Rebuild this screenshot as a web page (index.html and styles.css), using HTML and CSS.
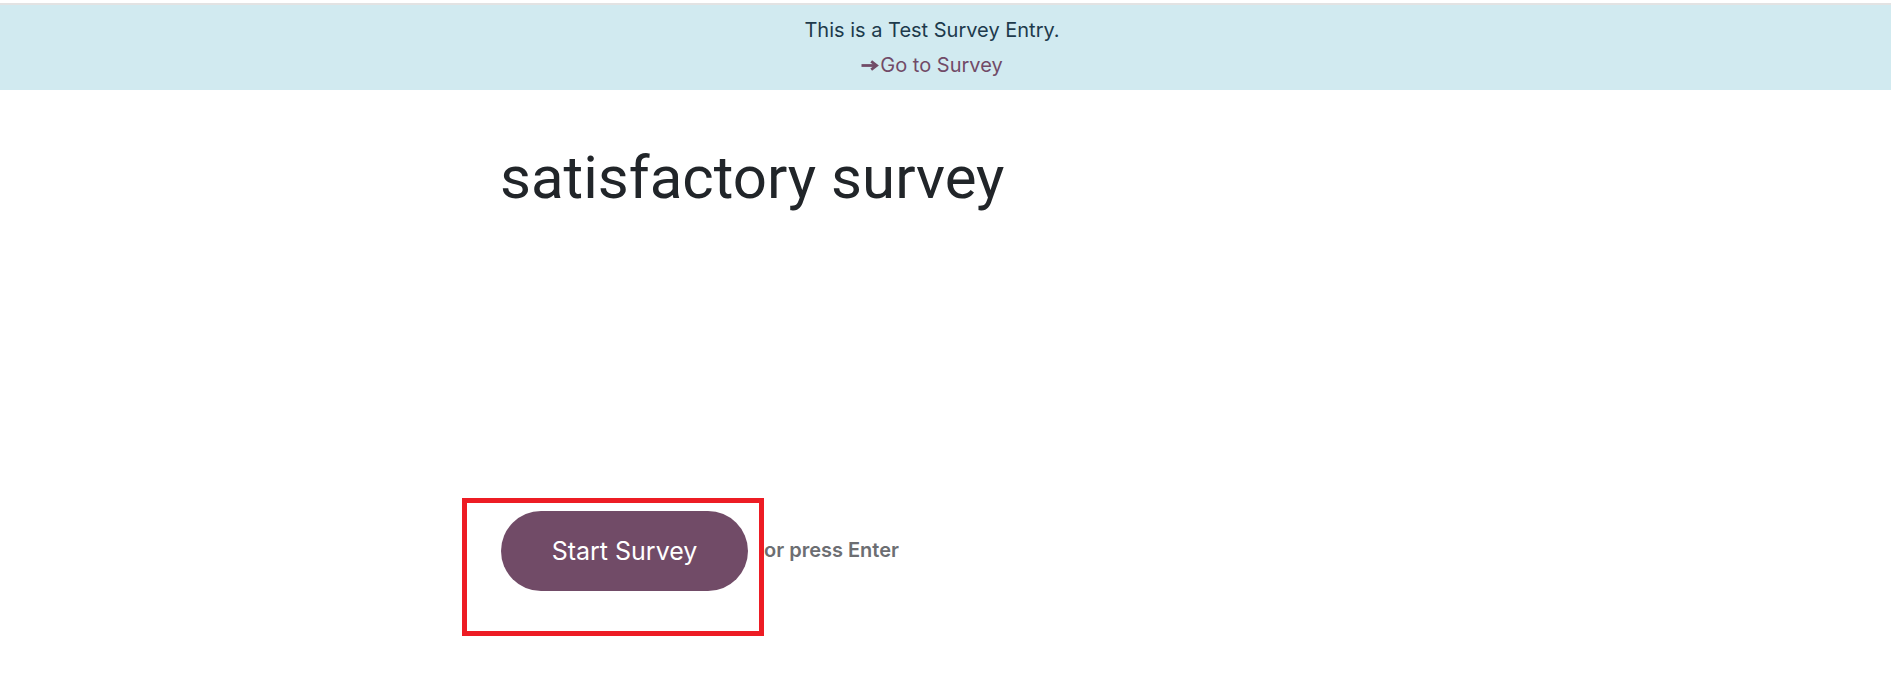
FILE: index.html
```html
<!DOCTYPE html>
<html lang="en">
<head>
<meta charset="utf-8">
<title>satisfactory survey</title>
<link rel="stylesheet" href="styles.css">
</head>
<body>
<div class="topline"></div>
<div class="alert">
  <p class="alert-msg">This is a Test Survey Entry.</p>
  <a class="alert-link" href="#"><svg class="arrow" width="18" height="11" viewBox="0 0 18 11" aria-hidden="true"><path d="M0.5 5.5H14.5" fill="none" stroke="currentColor" stroke-width="2.8"/><path d="M10.2 1.3L15.6 5.5L10.2 9.7" fill="none" stroke="currentColor" stroke-width="2.8"/></svg>Go to Survey</a>
</div>
<main class="survey">
  <h1 class="title">satisfactory survey</h1>
  <div class="start-row">
    <div class="start-frame">
      <button class="btn-start" type="button">Start Survey</button>
      <span class="highlight"></span>
    </div>
    <span class="hint">or press Enter</span>
  </div>
</main>
</body>
</html>
```

FILE: styles.css
```css
* { box-sizing: border-box; }
html, body { margin: 0; padding: 0; background: #ffffff; }
body {
  font-family: Inter, "Noto Sans", "Liberation Sans", sans-serif;
  color: #212529;
}
.topline {
  height: 2px;
  margin-top: 3px;
  background: #e3e3e3;
}
.alert {
  background: #d1eaf0;
  height: 85px;
  padding: 8px 27px 0 0;
  text-align: center;
  font-size: 20px;
  line-height: 35px;
}
.alert-msg {
  margin: 0;
  color: #1d3a4c;
}
.alert-link {
  color: #714b67;
  text-decoration: none;
}
.arrow {
  vertical-align: 1px;
  margin-right: 1px;
}
.survey {
  width: 891px;
  margin: 0 auto;
  padding-top: 52px;
}
.title {
  margin: 0;
  font-family: Roboto, "Liberation Sans", sans-serif;
  font-size: 60px;
  font-weight: 400;
  line-height: 72px;
  color: #212529;
}
.start-row {
  display: flex;
  align-items: flex-start;
  margin-top: 284px;
  margin-left: -38px;
}
.start-frame {
  position: relative;
  padding: 13px 16px 45px 39px;
}
.btn-start {
  display: block;
  width: 247px;
  height: 80px;
  border: none;
  border-radius: 40px;
  background: #714b67;
  color: #ffffff;
  font-family: inherit;
  font-size: 25px;
  font-weight: 400;
  padding: 0;
}
.highlight {
  position: absolute;
  inset: 0;
  border: 5px solid #ed1c24;
  pointer-events: none;
}
.hint {
  margin-top: 40px;
  font-size: 20px;
  line-height: 24px;
  font-weight: 600;
  color: #6c6e72;
}
```
